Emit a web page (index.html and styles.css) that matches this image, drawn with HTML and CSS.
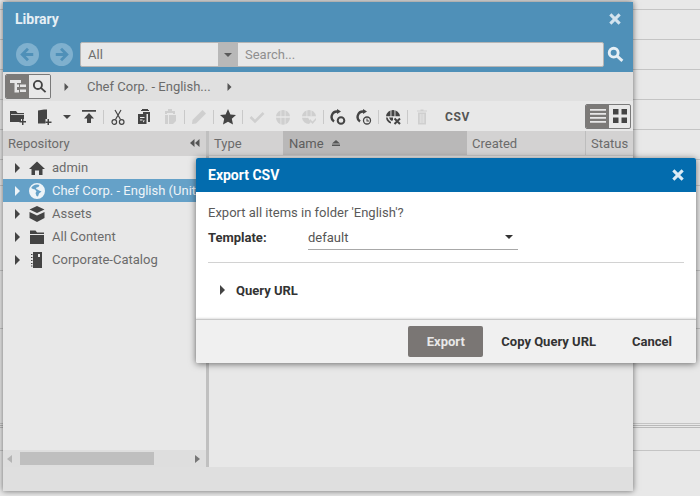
FILE: index.html
```html
<!DOCTYPE html>
<html>
<head>
    <meta charset="UTF-8">
    <title>Library</title>
    <link rel="stylesheet" href="styles.css">
</head>
<body>
<!--lines of the page behind the windows-->
<div class="backdrop">
    <div class="line h9"></div>
    <div class="line h30"></div>
    <div class="line h30"></div>
    <div class="line h30"></div>
    <div class="line h30"></div>
    <div class="line h30"></div>
    <div class="line h26"></div>
    <div class="line h85"></div>
    <div class="line h58"></div>
    <div class="line h95"></div>
    <div class="line h2"></div>
    <div class="line h2"></div>
    <div class="line h23"></div>
</div>

<!--library window-->
<div class="library">
    <div class="libHead">
        <div class="libTitle">
            <span>Library</span>
            <svg class="closeIcon" viewBox="0 0 12 12"><path d="M2 2l8 8M10 2l-8 8"/></svg>
        </div>
        <div class="libSearch">
            <svg class="navBtn navBack" viewBox="0 0 24 24"><circle cx="12" cy="12" r="12"/><path class="navArrow" d="M18 12H7.500M12.500 6L6.500 12l6 6"/></svg>
            <svg class="navBtn navNext" viewBox="0 0 24 24"><circle cx="12" cy="12" r="12"/><path class="navArrow" d="M6 12h10.500M11.500 6l6 6-6 6"/></svg>
            <div class="searchBox">
                <div class="searchType">All</div>
                <div class="searchCaret"><i class="caretDown"></i></div>
                <div class="searchText">Search...</div>
            </div>
            <svg class="searchGo" viewBox="0 0 16 16"><circle cx="6.300" cy="6.300" r="4.200"/><path d="M9.500 9.500l5 4.500"/></svg>
        </div>
    </div>

    <div class="crumbs">
        <div class="toggle">
            <div class="toggleOn">
                <svg class="toggleSvg" viewBox="0 0 18 18"><path fill="#e6e6e6" d="M1 2h11v3H8v1.500h2V9H8v3h2v2.500H5.500V5H1z M11 6.500h6V9h-6z M11 11.500h6V14h-6z"/></svg>
            </div>
            <div class="toggleOff">
                <svg class="lens" viewBox="0 0 16 16"><circle cx="6.300" cy="6.300" r="4.300"/><path d="M9.500 9.500l5 4.500"/></svg>
            </div>
        </div>
        <i class="caretRight crumbArrow"></i>
        <span class="crumbText">Chef Corp. - English...</span>
        <i class="caretRight crumbArrow2"></i>
    </div>

    <div class="toolbar">
        <span class="tool"><svg viewBox="0 0 16 16"><path d="M0 2h6l1.500 2H14v6h-3v3H0z"/><path d="M12 10h1.500v2H16v1.500h-2.500V16H12v-2.500H9.500V12H12z"/><path fill="#e8e8e8" d="M1 5h13v.8H1z"/></svg></span>
        <span class="tool"><svg viewBox="0 0 16 16"><path d="M2 1.500L8 .5h3v9.500H9.500v4.500H2z"/><path d="M11.500 10H13v2.500h2.500V14H13v2h-1.500v-2H9.500v-1.500h2z"/></svg></span>
        <span class="toolCaret"><i class="caretDown"></i></span>
        <span class="tool"><svg viewBox="0 0 16 16"><path d="M1 1h14v1.800H1zM8 4l5 5.500H10V14H6V9.500H3z"/></svg></span>
        <i class="sep"></i>
        <span class="tool"><svg class="stroke" viewBox="0 0 16 16"><path d="M5 1l5.500 9.500M11 1L5.500 10.500"/><circle cx="4.300" cy="13" r="2.300"/><circle cx="11.700" cy="13" r="2.300"/></svg></span>
        <span class="tool"><svg viewBox="0 0 16 16"><path d="M5 1h8v1H5z M6 0h6v1H6z M4 3h10v10h-2V5H7V3z M2 5h8.500v10H2z"/><path fill="#e8e8e8" d="M4 8h4.500v.9H4zM4 10.500h2.500v.9H4zM7 11.500l2 0-2 2z"/></svg></span>
        <span class="tool off"><svg viewBox="0 0 16 16"><path d="M3 2h3V0h4v2h3v3h-2V4H5v1H3zM3 6h3v9H3zM7 6h7v6l-3 3H7z"/></svg></span>
        <i class="sep"></i>
        <span class="tool off"><svg viewBox="0 0 16 16"><path d="M11.500 1L15 4.500 5 14.500 1 15l.500-4z"/></svg></span>
        <i class="sep"></i>
        <span class="tool star"><svg viewBox="0 0 16 16"><path d="M8 0l2.400 5.400 5.600.6-4.200 3.800 1.200 5.800L8 12.700l-5 2.900 1.200-5.800L0 6l5.600-.6z"/></svg></span>
        <i class="sep"></i>
        <span class="tool off"><svg class="stroke thick" viewBox="0 0 16 16"><path d="M1.500 8l4.500 4.500L14.500 4"/></svg></span>
        <span class="tool off"><svg viewBox="0 0 16 16"><path d="M8 1a7 7 0 0 1 7 6.300H1A7 7 0 0 1 8 1zM1 8.700h14A7 7 0 0 1 1 8.700z"/><path fill="#e8e8e8" d="M5.500 0h.8v16h-.8zM9.700 0h.8v16h-.8z"/></svg></span>
        <span class="tool off"><svg viewBox="0 0 16 16"><path d="M8 1a7 7 0 0 1 7 6.300H1A7 7 0 0 1 8 1zM1 8.700h6L10 13l-2 2A7 7 0 0 1 1 8.700z"/><path fill="#e8e8e8" d="M5.500 0h.8v9h-.8zM9.700 0h.8v7h-.8z"/><path d="M9 10l2.500 2.500L15 9v2l-3.500 4L9 12z"/></svg></span>
        <i class="sep"></i>
        <span class="tool"><svg viewBox="0 0 16 16"><path class="arc" d="M7.500 2.500A5.500 5.500 0 0 0 4 12.500"/><path d="M7 0l4 2.500L7 5z"/><circle class="ring" cx="11" cy="11.500" r="3.300"/></svg></span>
        <span class="tool"><svg viewBox="0 0 16 16"><path class="arc" d="M7.500 2.500A5.500 5.500 0 0 0 4 12.500"/><path d="M7 0l4 2.500L7 5z"/><circle class="ring thin" cx="11" cy="11.500" r="3.500"/><path d="M10.500 9.500h1v2h1.500v1h-2.500z"/></svg></span>
        <i class="sep"></i>
        <span class="tool"><svg viewBox="0 0 16 16"><path d="M8 1a7 7 0 0 1 7 6.300H1A7 7 0 0 1 8 1z"/><path d="M1 8.500h1.500A7 7 0 0 0 6 13v1.500A7 7 0 0 1 1 8.500zM4 8.500h4V11l-1 1A6 6 0 0 1 4 8.500z"/><path fill="#e8e8e8" d="M5.500 0h.9v8h-.9zM9.500 0h.9v8h-.9z"/><path class="xMark" d="M9.500 9.500l5.500 5.500M15 9.500L9.500 15"/></svg></span>
        <i class="sep"></i>
        <span class="tool off"><svg viewBox="0 0 16 16"><path d="M3 1.500h3.500V.5h3v1H13v1H3zM4 3.500h8V15.500H4z"/><path fill="#e8e8e8" d="M5.800 5h.8v9h-.8zM7.600 5h.8v9h-.8zM9.400 5h.8v9h-.8z"/></svg></span>
        <span class="csv">CSV</span>
        <div class="viewSwitch">
            <div class="viewList"><svg viewBox="0 0 16 16"><path d="M0 1h16v1.800H0zM0 5h16v1.800H0zM0 9h16v1.800H0zM0 13h16v1.800H0z"/></svg></div>
            <div class="viewGrid"><svg viewBox="0 0 16 16"><path d="M1 1h5.500v5.500H1zM9.500 1H15v5.500H9.500zM1 9.500h5.500V15H1zM9.500 9.500H15V15H9.500z"/></svg></div>
        </div>
    </div>

    <div class="panes">
        <div class="treePane">
            <div class="treeHead">
                <span>Repository</span>
                <svg class="collapse" viewBox="0 0 10 8"><path d="M4.500 0v8L0 4zM9.500 0v8L5 4z"/></svg>
            </div>
            <div class="tree">
                <div class="treeRow">
                    <i class="caretRight"></i>
                    <svg class="treeIcon" viewBox="0 0 16 16"><path d="M8 1.500L16 9h-2.500v6h-3.500v-4.500H6V15H2.500V9H0z"/></svg>
                    <span>admin</span>
                </div>
                <div class="treeRow active">
                    <i class="caretRight"></i>
                    <svg class="treeIcon" viewBox="0 0 16 16"><path fill-rule="evenodd" d="M8 0a8 8 0 1 1 0 16A8 8 0 0 1 8 0zM8 1.500a6.500 6.500 0 0 0-5.800 3.600l1.800 1 2 .5 1.500 2L6.500 10l1 3 1.500.5 1-3 2.500-2-2.500-1-1.500-1L7 6l.5-1.500L9.500 4l1-2.100A6.500 6.500 0 0 0 8 1.500z"/></svg>
                    <span>Chef Corp. - English (United States)</span>
                </div>
                <div class="treeRow">
                    <i class="caretRight"></i>
                    <svg class="treeIcon" viewBox="0 0 16 16"><path d="M8 0l7.500 3.500L8 7 .5 3.500zM.5 6L8 9.500 15.500 6v6L8 16 .5 12z"/></svg>
                    <span>Assets</span>
                </div>
                <div class="treeRow">
                    <i class="caretRight"></i>
                    <svg class="treeIcon" viewBox="0 0 16 16"><path d="M1 1.500h5.500L8 3.500h7V5H1zM1 6h14v9H1z"/></svg>
                    <span>All Content</span>
                </div>
                <div class="treeRow">
                    <i class="caretRight"></i>
                    <svg class="treeIcon" viewBox="0 0 16 16"><path d="M4 0h9v16H4zM2 2h1.500v1H2zM2 5h1.500v1H2zM2 8h1.500v1H2zM2 11h1.500v1H2zM2 13.500h1.500v1H2z"/><path fill="#e8e8e8" d="M9 2h2v3H9z"/></svg>
                    <span>Corporate-Catalog</span>
                </div>
            </div>
            <div class="hScroll">
                <i class="scrollLeft"></i>
                <div class="scrollTrack"><div class="scrollThumb"></div></div>
                <i class="scrollRight"></i>
            </div>
        </div>
        <div class="splitter"></div>
        <div class="listPane">
            <div class="listHead">
                <div class="col colType">Type</div>
                <div class="col colName">Name
                    <svg class="sortIcon" viewBox="0 0 8 7"><path d="M4 0l4 3.500H0zM0 4.500h8V6H0z"/></svg>
                </div>
                <div class="col colCreated">Created</div>
                <div class="col colStatus">Status</div>
            </div>
        </div>
    </div>
    <div class="statusBar"></div>
</div>

<!--export dialog-->
<div class="dialog">
    <div class="dlgHead">
        <span>Export CSV</span>
        <svg class="closeIcon" viewBox="0 0 12 12"><path d="M2 2l8 8M10 2l-8 8"/></svg>
    </div>
    <div class="dlgBody">
        <div class="question">Export all items in folder 'English'?</div>
        <div class="formRow">
            <label class="formLabel">Template:</label>
            <div class="combo"><span>default</span><i class="caretDown"></i></div>
        </div>
        <div class="rule"></div>
        <div class="queryRow"><i class="caretRight"></i><span>Query URL</span></div>
    </div>
    <div class="dlgFoot">
        <div class="btn btnMain">Export</div>
        <div class="btn btnCopy">Copy Query URL</div>
        <div class="btn btnCancel">Cancel</div>
    </div>
</div>
</body>
</html>
```

FILE: styles.css
```css
* {
    margin: 0;
    padding: 0;
    box-sizing: border-box;
}
html, body {
    height: 100%;
    overflow: hidden;
}
body {
    background-color: #e8e8e8;
    font-family: Roboto, "Liberation Sans", sans-serif;
    font-size: 13px;
}
i {
    display: block;
    flex: none;
}
svg {
    display: block;
    flex: none;
}

/* page behind */
.backdrop {
    position: absolute;
    left: 0;
    top: 0;
    width: 100%;
}
.line {
    border-bottom: 1px solid #c4c4c4;
}
.h2 { height: 2px; border-bottom-color: #b9b9b9; }
.h9 { height: 10px; }
.h23 { height: 23px; }
.h26 { height: 26px; }
.h30 { height: 30px; }
.h58 { height: 58px; }
.h85 { height: 85px; }
.h95 { height: 95px; }

/* small arrows */
.caretRight {
    width: 0;
    height: 0;
    border-left: 5px solid #444;
    border-top: 5px solid transparent;
    border-bottom: 5px solid transparent;
}
.caretDown {
    width: 0;
    height: 0;
    border-top: 4px solid #444;
    border-left: 4px solid transparent;
    border-right: 4px solid transparent;
}
.closeIcon {
    width: 14px;
    height: 14px;
    fill: none;
    stroke: #d3e3ee;
    stroke-width: 2.600;
}

/* library window */
.library {
    position: absolute;
    left: 3px;
    top: 2px;
    width: 630px;
    height: 489px;
    display: flex;
    flex-direction: column;
    background-color: #e8e8e8;
    box-shadow: 0 0 6px rgba(0, 0, 0, 0.55);
}
.libHead {
    height: 70px;
    flex: none;
    background-color: #4f90b8;
}
.libTitle {
    height: 40px;
    padding: 0 11px 6px 12px;
    display: flex;
    justify-content: space-between;
    align-items: center;
    font-size: 14px;
    font-weight: 700;
    color: #e6eff5;
}
.libSearch {
    height: 25px;
    display: flex;
    align-items: center;
    padding-left: 13px;
}
.navBtn {
    width: 23px;
    height: 23px;
}
.navBtn circle {
    fill: #7fb0ce;
}
.navArrow {
    fill: none;
    stroke: #4f90b8;
    stroke-width: 3;
}
.navNext {
    margin-left: 11px;
}
.searchBox {
    width: 524px;
    height: 25px;
    margin-left: 7px;
    display: flex;
    background-color: #e8e8e8;
    border: 1px solid #b5b5b5;
    border-radius: 2px;
    overflow: hidden;
    color: #6e6e6e;
}
.searchType {
    width: 137px;
    padding: 0 7px;
    line-height: 23px;
}
.searchCaret {
    width: 20px;
    background-color: #b8b8b8;
    display: flex;
    justify-content: center;
    align-items: center;
}
.searchCaret .caretDown {
    border-top-color: #5a5a5a;
}
.searchText {
    flex: 1;
    padding: 0 7px;
    line-height: 23px;
    color: #8f8f8f;
}
.searchGo {
    width: 17px;
    height: 17px;
    margin-left: 3px;
    fill: none;
    stroke: #e6eff5;
    stroke-width: 2.700;
}

/* breadcrumb row */
.crumbs {
    height: 29px;
    flex: none;
    display: flex;
    align-items: center;
    padding-left: 2px;
    background-color: #e0e0e0;
}
.toggle {
    width: 46px;
    height: 25px;
    display: flex;
    border: 1px solid #7a7a7a;
    border-radius: 2px;
    overflow: hidden;
}
.toggleOn {
    width: 23px;
    background-color: #7c7a78;
    display: flex;
    align-items: center;
    justify-content: center;
}
.toggleOff {
    flex: 1;
    background-color: #e8e8e8;
    display: flex;
    align-items: center;
    justify-content: center;
}
.toggleSvg {
    width: 18px;
    height: 18px;
}
.lens {
    width: 15px;
    height: 15px;
    fill: none;
    stroke: #444;
    stroke-width: 2;
}
.crumbArrow {
    margin-left: 13px;
    transform: scale(0.8);
    border-left-color: #555;
}
.crumbText {
    margin-left: 18px;
    color: #6b6b6b;
    font-size: 13px;
}
.crumbArrow2 {
    margin-left: 16px;
    transform: scale(0.8);
    border-left-color: #555;
}

/* toolbar */
.toolbar {
    height: 30px;
    flex: none;
    display: flex;
    align-items: center;
    padding: 2px 0 0 2px;
    background-color: #e8e8e8;
}
.tool {
    width: 26px;
    height: 16px;
    flex: none;
    display: flex;
    justify-content: center;
    fill: #444;
}
.tool svg {
    width: 16px;
    height: 16px;
}
.tool .stroke {
    fill: none;
    stroke: #444;
    stroke-width: 1.200;
}
.tool .thick {
    stroke-width: 2.500;
}
.tool.off {
    fill: #cfcfcf;
}
.tool.off .stroke {
    stroke: #cfcfcf;
}
.arc {
    fill: none;
    stroke: #444;
    stroke-width: 2.400;
}
.ring {
    fill: none;
    stroke: #444;
    stroke-width: 2;
}
.ring.thin {
    stroke-width: 1.300;
}
.xMark {
    fill: none;
    stroke: #444;
    stroke-width: 2;
}
.toolCaret {
    width: 19px;
    flex: none;
    display: flex;
    justify-content: center;
}
.sep {
    width: 1px;
    height: 14px;
    margin: 0 1px 0 1px;
    background-color: #c9c9c9;
}
.csv {
    margin-left: 10px;
    font-size: 12px;
    font-weight: 700;
    letter-spacing: 0.6px;
    color: #555;
}
.viewSwitch {
    width: 46px;
    height: 25px;
    margin-left: auto;
    margin-right: 2px;
    margin-top: -2px;
    display: flex;
    border: 1px solid #7a7a7a;
    border-radius: 2px;
    overflow: hidden;
}
.viewList {
    width: 23px;
    background-color: #7c7a78;
    display: flex;
    align-items: center;
    justify-content: center;
    fill: #e8e8e8;
}
.viewGrid {
    flex: 1;
    display: flex;
    align-items: center;
    justify-content: center;
    fill: #444;
}
.viewList svg, .viewGrid svg {
    width: 16px;
    height: 16px;
}

/* panes */
.panes {
    flex: 1;
    display: flex;
    min-height: 0;
}
.treePane {
    width: 203px;
    flex: none;
    display: flex;
    flex-direction: column;
}
.treeHead {
    height: 25px;
    flex: none;
    display: flex;
    align-items: center;
    justify-content: space-between;
    padding: 0 6px 1px 5px;
    background-color: #d3d2d2;
    color: #6b6b6b;
}
.collapse {
    width: 10px;
    height: 8px;
    fill: #555;
}
.tree {
    flex: 1;
}
.treeRow {
    height: 23px;
    display: flex;
    align-items: center;
    padding-left: 12px;
    color: #6b6b6b;
    white-space: nowrap;
    fill: #444;
}
.treeRow .caretRight {
    border-left-color: #444;
}
.treeIcon {
    width: 16px;
    height: 16px;
    margin-left: 9px;
    margin-right: 7px;
}
.treeRow.active {
    background-color: #65a1c8;
    color: #eef4f8;
    fill: #eef4f8;
}
.treeRow.active .caretRight {
    border-left-color: #eef4f8;
}
.hScroll {
    height: 17px;
    flex: none;
    display: flex;
    align-items: center;
    background-color: #dedede;
    padding: 0 6px 0 4px;
}
.scrollLeft {
    width: 0;
    height: 0;
    border-right: 5px solid #b5b5b5;
    border-top: 4px solid transparent;
    border-bottom: 4px solid transparent;
}
.scrollRight {
    width: 0;
    height: 0;
    border-left: 5px solid #777;
    border-top: 4px solid transparent;
    border-bottom: 4px solid transparent;
}
.scrollTrack {
    flex: 1;
    height: 13px;
    margin: 0 5px 0 8px;
}
.scrollThumb {
    width: 134px;
    height: 13px;
    background-color: #bfbfbf;
}
.splitter {
    width: 3px;
    flex: none;
    background-color: #c0c0c0;
}
.listPane {
    flex: 1;
}
.listHead {
    height: 25px;
    display: flex;
    background-color: #d3d2d2;
    border-bottom: 1px solid #c6c6c6;
    color: #6b6b6b;
}
.col {
    display: flex;
    align-items: center;
    padding-left: 5px;
    white-space: nowrap;
}
.colType {
    width: 74px;
}
.colName {
    width: 184px;
    padding-left: 6px;
    background-color: #b9b8b8;
    color: #5e5e5e;
}
.colCreated {
    width: 119px;
    border-right: 1px solid #bdbdbd;
}
.colStatus {
    flex: 1;
}
.sortIcon {
    width: 8px;
    height: 7px;
    margin-left: 8px;
    fill: #555;
}
.statusBar {
    height: 24px;
    flex: none;
    background-color: #dfdfdf;
}

/* export dialog */
.dialog {
    position: absolute;
    left: 196px;
    top: 158px;
    width: 500px;
    height: 205px;
    display: flex;
    flex-direction: column;
    background-color: #fff;
    border-radius: 2px;
    box-shadow: 0 1px 7px rgba(0, 0, 0, 0.55);
}
.dlgHead {
    height: 34px;
    flex: none;
    display: flex;
    align-items: center;
    justify-content: space-between;
    padding: 0 11px 0 12px;
    background-color: #036cae;
    color: #fff;
    font-size: 14px;
    font-weight: 700;
    border-radius: 2px 2px 0 0;
}
.dlgHead .closeIcon {
    stroke: #dcebf5;
}
.dlgBody {
    flex: 1;
    padding: 13px 12px 0;
}
.question {
    height: 15px;
    line-height: 15px;
    color: #5a5a5a;
}
.formRow {
    display: flex;
    align-items: center;
    margin-top: 5px;
    height: 25px;
}
.formLabel {
    width: 100px;
    font-weight: 700;
    color: #333;
}
.combo {
    width: 210px;
    height: 25px;
    display: flex;
    align-items: center;
    justify-content: space-between;
    padding-right: 5px;
    border-bottom: 1px solid #a8a8a8;
    color: #555;
}
.combo .caretDown {
    border-top-color: #333;
}
.rule {
    height: 1px;
    margin-top: 12px;
    background-color: #d2d2d2;
}
.queryRow {
    display: flex;
    align-items: center;
    margin-top: 19px;
    padding-left: 12px;
    height: 16px;
    font-weight: 700;
    color: #333;
}
.queryRow span {
    margin-left: 11px;
}
.dlgFoot {
    height: 44px;
    flex: none;
    display: flex;
    align-items: center;
    padding-right: 24px;
    background-color: #f0f0f0;
    border-top: 1px solid #c8c8c8;
    box-shadow: 0 -1px 2px rgba(0, 0, 0, 0.12);
    border-radius: 0 0 2px 2px;
    font-weight: 700;
    color: #333;
}
.btn {
    height: 31px;
    line-height: 31px;
    white-space: nowrap;
}
.btnMain {
    width: 75px;
    margin-left: auto;
    text-align: center;
    background-color: #7a7674;
    color: #e8e8e8;
    border-radius: 2px;
}
.btnCopy {
    margin-left: 18px;
}
.btnCancel {
    margin-left: 36px;
}
```
